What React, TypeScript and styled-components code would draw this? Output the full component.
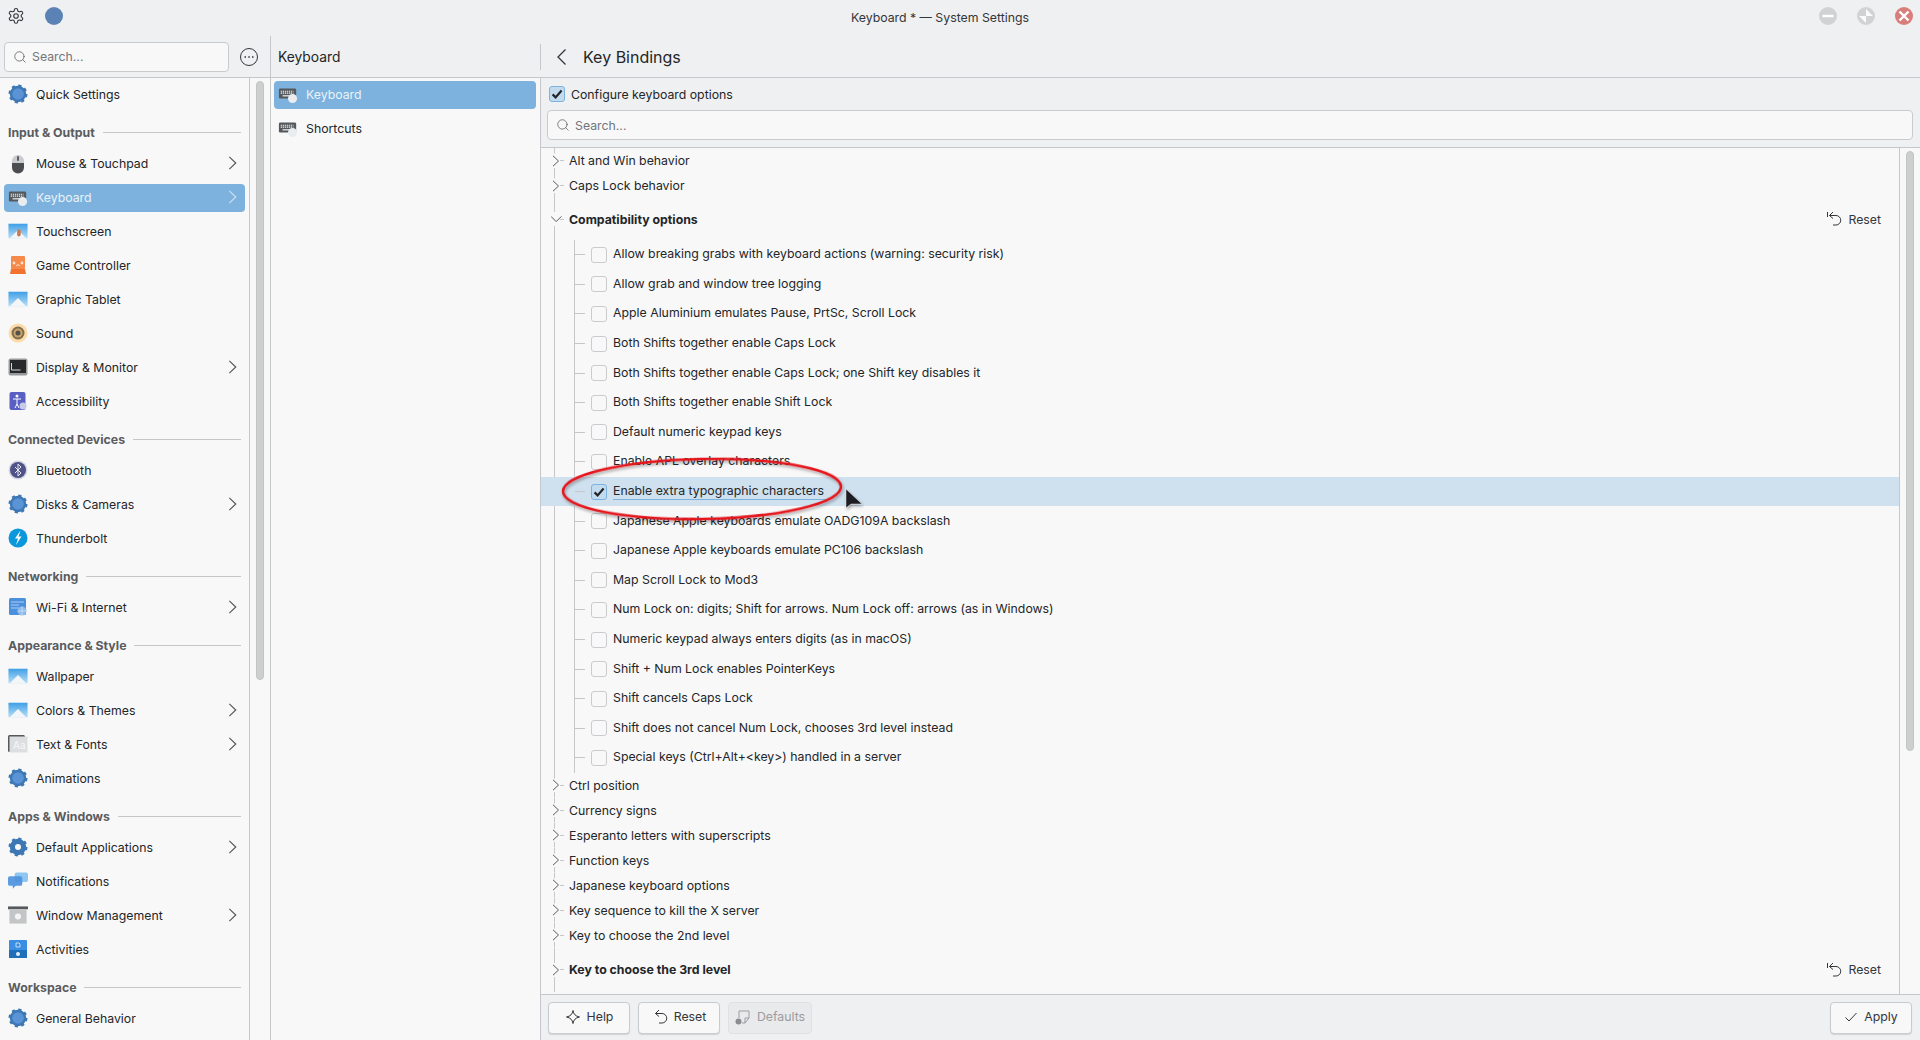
import React from "react";
import styled, { createGlobalStyle } from "styled-components";
import { Search } from "lucide-react";

const Global = createGlobalStyle`
  html, body { margin: 0; padding: 0; height: 100%; overflow: hidden; }
  body { font-family: Inter, "Noto Sans", sans-serif; font-size: 12.3px; color: #232629; background: #eff0f1; }
`;

const Window = styled.div`
  position: relative;
  width: 1920px;
  height: 1040px;
  display: flex;
  flex-direction: column;
  overflow: hidden;
`;
const TitleBar = styled.div`
  height: 36px;
  flex: none;
  display: grid;
  grid-template-columns: 200px 1fr 200px;
  align-items: center;
`;
const TitleLeft = styled.div`
  display: flex;
  align-items: center;
  gap: 20px;
  padding: 0 0 5px 7px;
`;
const TitleText = styled.div`
  text-align: center;
  padding: 0 40px 2px 0;
  color: #33363a;
`;
const TitleRight = styled.div`
  display: flex;
  justify-content: flex-end;
  gap: 20px;
  padding: 0 7px 4px 0;
`;
const Dot = styled.div`
  width: 18px;
  height: 18px;
  border-radius: 50%;
  background: #5b82b4;
`;
const Columns = styled.div`
  flex: 1;
  display: flex;
  min-height: 0;
`;
const Sidebar = styled.div`
  width: 270px;
  flex: none;
  border-right: 1px solid #c5c7ca;
  display: flex;
  flex-direction: column;
  min-height: 0;
`;
const HeaderBar = styled.div`
  height: 41px;
  flex: none;
  border-bottom: 1px solid #c5c7ca;
  display: flex;
  align-items: center;
`;
const SideHeader = styled(HeaderBar)`
  padding: 0 0 0 4px;
  gap: 10px;
`;
const SearchBox = styled.div<{ $w?: string }>`
  width: ${(p) => p.$w || "225px"};
  height: 30px;
  box-sizing: border-box;
  flex: none;
  border: 1px solid #c9cbce;
  border-radius: 4px;
  background: #f8f8f8;
  display: flex;
  align-items: center;
  gap: 5px;
  padding: 0 8px;
  color: #71767c;
`;
const SideBody = styled.div`
  flex: 1;
  min-height: 0;
  display: flex;
  background: #f8f8f8;
`;
const SideList = styled.div`
  width: 249px;
  flex: none;
  border-right: 1px solid #c5c7ca;
  overflow: hidden;
  display: flex;
  flex-direction: column;
`;
const ScrollGutter = styled.div<{ $w: number }>`
  width: ${(p) => p.$w}px;
  flex: none;
  display: flex;
  justify-content: center;
  padding-top: 3px;
`;
const Thumb = styled.div<{ $w: number; $h: number }>`
  width: ${(p) => p.$w}px;
  height: ${(p) => p.$h}px;
  border-radius: 4px;
  background: #cdcfcf;
  border: 1px solid #c3c5c5;
  box-sizing: border-box;
`;
const SideRow = styled.div<{ $on?: boolean }>`
  height: 28px;
  box-sizing: border-box;
  flex: none;
  margin: 3px 4px;
  border-radius: 4px;
  display: flex;
  align-items: center;
  gap: 8px;
  padding: 0 4px 2px 4px;
  background: ${(p) => (p.$on ? "#7cb2dd" : "transparent")};
  color: ${(p) => (p.$on ? "#eaf2f9" : "#232629")};
`;
const MidRow = styled(SideRow)`
  margin-left: 3px;
`;
const RowIcon = styled.span`
  width: 20px;
  height: 20px;
  flex: none;
  display: flex;
  align-items: center;
  justify-content: center;
`;
const RowLabel = styled.span`
  flex: 1;
  white-space: nowrap;
`;
const SectionHead = styled.div`
  height: 35px;
  flex: none;
  box-sizing: border-box;
  padding: 5px 8px 0 8px;
  display: flex;
  align-items: center;
  gap: 8px;
  font-weight: 700;
  color: #5a5c5f;
  white-space: nowrap;
  &::after {
    content: "";
    flex: 1;
    height: 1px;
    background: #c5c7ca;
  }
`;
const Middle = styled.div`
  width: 270px;
  flex: none;
  display: flex;
  flex-direction: column;
  min-height: 0;
`;
const MidHeader = styled(HeaderBar)`
  padding-left: 7px;
  justify-content: space-between;
  font-size: 13.8px;
`;
const HeaderSep = styled.div`
  width: 1px;
  height: 26px;
  background: #c5c7ca;
`;
const MidList = styled.div`
  flex: 1;
  background: #f8f8f8;
  border-right: 1px solid #c5c7ca;
  display: flex;
  flex-direction: column;
`;
const Content = styled.div`
  flex: 1;
  min-width: 0;
  display: flex;
  flex-direction: column;
`;
const ContentHeader = styled(HeaderBar)`
  padding-left: 14px;
  gap: 14px;
  font-size: 16px;
`;
const OptionBar = styled.div`
  height: 70px;
  flex: none;
  box-sizing: border-box;
  border-bottom: 1px solid #c5c7ca;
  padding: 0 7px 0 6px;
  display: flex;
  flex-direction: column;
`;
const ConfigRow = styled.div`
  height: 32px;
  flex: none;
  display: flex;
  align-items: center;
  gap: 6px;
  padding-left: 2px;
`;
const TreeArea = styled.div`
  flex: 1;
  min-height: 0;
  display: flex;
  background: #f8f8f8;
`;
const Tree = styled.div`
  width: 1358px;
  flex: none;
  border-right: 1px solid #c5c7ca;
  overflow: hidden;
`;
const line = "linear-gradient(#c5c7ca, #c5c7ca)";
const GroupRow = styled.div<{ $h?: number; $bold?: boolean }>`
  height: ${(p) => p.$h || 25}px;
  display: flex;
  align-items: center;
  padding: 0 18px 0 10px;
  font-weight: ${(p) => (p.$bold ? 700 : 400)};
  background-image: ${line}, ${line}, ${line};
  background-repeat: no-repeat;
  background-size: 1px calc(50% - 7px), 1px calc(50% - 7px), 4px 1px;
  background-position: 13px 0, 13px 100%, 19px 50%;
`;
const Twist = styled.span`
  width: 18px;
  height: 12px;
  flex: none;
  display: flex;
  align-items: center;
`;
const GroupLabel = styled.span`
  flex: 1;
`;
const ResetBtn = styled.span`
  display: flex;
  align-items: center;
  gap: 6px;
  color: #33363a;
  font-weight: 400;
`;
const LeafRow = styled.div<{ $on?: boolean }>`
  height: 29.6px;
  display: flex;
  align-items: center;
  gap: 6px;
  padding-left: 50px;
  white-space: nowrap;
  background-color: ${(p) => (p.$on ? "#cfe0ee" : "transparent")};
  background-image: ${(p) => (p.$on ? `${line}` : `${line}, ${line}, ${line}`)};
  background-repeat: no-repeat;
  background-size: ${(p) => (p.$on ? "10px 1px" : "1px 100%, 1px 100%, 10px 1px")};
  background-position: ${(p) => (p.$on ? "34px 50%" : "13px 0, 33px 0, 34px 50%")};
`;
const Box = styled.span<{ $on?: boolean }>`
  width: 16px;
  height: 16px;
  box-sizing: border-box;
  flex: none;
  border-radius: 3px;
  border: 1px solid ${(p) => (p.$on ? "#7cb2dd" : "#c9cbce")};
  background: ${(p) => (p.$on ? "#c3dbee" : "#f8f8f8")};
  display: flex;
  align-items: center;
  justify-content: center;
`;
const LeafText = styled.span<{ $on?: boolean }>`
  padding: 0 2px 1px 0;
  border-bottom: 1px solid ${(p) => (p.$on ? "#7cb2dd" : "transparent")};
`;
const Footer = styled.div`
  height: 46px;
  flex: none;
  box-sizing: border-box;
  border-top: 1px solid #c5c7ca;
  display: flex;
  align-items: center;
  gap: 8px;
  padding: 0 8px 0 7px;
`;
const Button = styled.div<{ $off?: boolean; $w: number }>`
  width: ${(p) => p.$w}px;
  height: 32px;
  box-sizing: border-box;
  border-radius: 4px;
  border: 1px solid ${(p) => (p.$off ? "#e0e1e3" : "#c9cbce")};
  background: ${(p) => (p.$off ? "#e9eaeb" : "#f8f8f8")};
  box-shadow: ${(p) => (p.$off ? "none" : "0 1px 1px rgba(0,0,0,.12)")};
  color: ${(p) => (p.$off ? "#9a9c9f" : "#33363a")};
  display: flex;
  align-items: center;
  justify-content: center;
  gap: 6px;
  padding-bottom: 2px;
`;
const Spacer = styled.div`
  flex: 1;
`;
const Overlay = styled.svg`
  position: absolute;
  left: 0;
  top: 0;
  pointer-events: none;
`;

const Chevron = ({ color = "#55585c", size = 12 }: { color?: string; size?: number }) => (
  <svg width={size} height={size} viewBox="0 0 12 12" fill="none">
    <path d="M2 .8 7.500 6 2 11.200" stroke={color} strokeWidth="1" />
  </svg>
);
const ChevronDown = () => (
  <svg width="12" height="12" viewBox="0 0 12 12" fill="none">
    <path d="M0 3.400 5.200 8.600l5.200-5.200" stroke="#55585c" strokeWidth="1" />
  </svg>
);
const Check = ({ size = 12 }: { size?: number }) => (
  <svg width={size} height={size} viewBox="0 0 12 12" fill="none">
    <path d="M1.600 6.400 4.600 9.400 10.600 2.600" stroke="#232629" strokeWidth="2.200" />
  </svg>
);
const ResetIcon = ({ bar }: { bar?: boolean }) => (
  <svg width="16" height="16" viewBox="0 0 16 16" fill="none" stroke="#33363a" strokeWidth="1">
    {bar && <path d="M1.500 1v5" />}
    <path d="M7 1 3.500 4.500 7 7.500M3.500 4.500H10a4.600 4.600 0 0 1 0 9.500H7" />
  </svg>
);

const Cog = ({ solid }: { solid?: boolean }) => (
  <svg width="20" height="20" viewBox="0 0 20 20">
    <circle cx="10" cy="10" r="8" fill="none" stroke="#3d78b4" strokeWidth="3" strokeDasharray="3 3.280" />
    <circle cx="10" cy="10" r="7" fill={solid ? "#3d78b4" : "#5a94d6"} stroke="#3d78b4" strokeWidth="2.400" />
    {solid && <circle cx="10" cy="10" r="3" fill="#f8f8f8" />}
  </svg>
);
const KeyboardIcon = () => (
  <svg width="22" height="20" viewBox="0 0 22 20">
    <rect x="1" y="4" width="19" height="11" rx="1.500" fill="#55585c" />
    <path d="M3 7h14M3 9h14" stroke="#f0f0f0" strokeWidth="1.300" strokeDasharray="1.400 .8" />
    <path d="M5 12h10" stroke="#f0f0f0" strokeWidth="1.300" />
    <circle cx="16" cy="15" r="5" fill="#e9edf0" />
  </svg>
);
const ScreenIcon = ({ hand }: { hand?: string }) => (
  <svg width="22" height="18" viewBox="0 0 22 18">
    <defs>
      <linearGradient id="sky" x1="0" y1="0" x2="0" y2="1">
        <stop offset="0" stopColor="#3f9fe6" />
        <stop offset="1" stopColor="#b9dff7" />
      </linearGradient>
    </defs>
    <rect x="0.500" y="1" width="21" height="16" fill="url(#sky)" />
    <path d="M2 17 11 8l9 9z" fill="#f3f6f8" />
    {hand && <rect x="10" y="7" width="4" height="8" rx="2" fill={hand} />}
  </svg>
);
const icons: Record<string, React.ReactNode> = {
  cog: <Cog />,
  solid: <Cog solid />,
  keyboard: <KeyboardIcon />,
  mouse: (
    <svg width="14" height="21" viewBox="0 0 14 21">
      <path d="M1 8a6 6 0 0 1 12 0v2H1z" fill="#c9cbce" />
      <path d="M1 10h12v4.500a6 6 0 0 1-12 0z" fill="#4b4d50" />
      <rect x="6" y="3" width="2" height="5" rx="1" fill="#5d6063" />
    </svg>
  ),
  touch: <ScreenIcon hand="#c97b52" />,
  tablet: <ScreenIcon />,
  colors: <ScreenIcon />,
  game: (
    <svg width="16" height="19" viewBox="0 0 16 19">
      <rect x="1" y="0" width="14" height="13" rx="1" fill="#f58a4b" />
      <path d="M1 13h14l1 5H0z" fill="#f2732e" />
      <circle cx="4" cy="7" r="1.400" fill="#fbe3d4" />
      <circle cx="12" cy="7" r="1.400" fill="#fbe3d4" />
      <path d="M6 10l2-1.500 2 1.500" stroke="#fbe3d4" fill="none" />
    </svg>
  ),
  sound: (
    <svg width="20" height="20" viewBox="0 0 20 20">
      <circle cx="10" cy="10" r="9.500" fill="#fcdba8" />
      <circle cx="10" cy="10" r="6.500" fill="#7c6c4f" />
      <circle cx="10" cy="10" r="4.500" fill="#c9a46b" />
      <circle cx="10" cy="10" r="2.500" fill="#55504a" />
    </svg>
  ),
  display: (
    <svg width="20" height="18" viewBox="0 0 20 18">
      <rect x="0.500" y="0.500" width="19" height="17" rx="2" fill="#97999b" />
      <rect x="2" y="2" width="16" height="13" fill="#26282b" />
      <path d="M3.500 5v7h9" stroke="#d5d7d9" fill="none" />
    </svg>
  ),
  access: (
    <svg width="18" height="18" viewBox="0 0 18 18">
      <rect x="0.500" y="0" width="16" height="18" rx="2" fill="#5a5fc4" />
      <circle cx="8" cy="4" r="1.500" fill="#fff" />
      <path d="M4 7h8M8 7v5l-2 4M8 12l2 4" stroke="#fff" fill="none" />
      <circle cx="14" cy="14" r="3.500" fill="#c7cbea" />
    </svg>
  ),
  bluetooth: (
    <svg width="20" height="20" viewBox="0 0 20 20">
      <circle cx="10" cy="10" r="9.500" fill="#d5d6e2" />
      <circle cx="10" cy="10" r="8" fill="#4f5388" />
      <path d="M7 7l6 6-3 3V4l3 3-6 6" stroke="#e6e7ef" fill="none" />
    </svg>
  ),
  bolt: (
    <svg width="20" height="20" viewBox="0 0 20 20">
      <circle cx="10" cy="10" r="9.500" fill="#0a97dc" />
      <path d="M12.500 2.500 7 10.500h3L8 17l5.500-8.500h-3z" fill="#fff" />
    </svg>
  ),
  wifi: (
    <svg width="18" height="18" viewBox="0 0 18 18">
      <rect x="0" y="0" width="17" height="17" rx="1.500" fill="#4a90dd" />
      <path d="M2 4h13M2 7h8M2 10h8" stroke="#a9cdf2" />
      <circle cx="13" cy="13" r="4.500" fill="#8dbbec" />
      <path d="M8.500 13h9M13 8.500v9" stroke="#d8e8f8" strokeWidth=".7" />
    </svg>
  ),
  fonts: (
    <svg width="20" height="18" viewBox="0 0 20 18">
      <rect x="0" y="0" width="17" height="17" rx="1.500" fill="#55585c" />
      <rect x="1.500" y="1.500" width="18" height="16" fill="#dcdedf" />
      <text x="5" y="14" fontSize="10" fill="#f8f8f8" fontFamily="Inter, sans-serif">Aa</text>
    </svg>
  ),
  notify: (
    <svg width="21" height="19" viewBox="0 0 21 19">
      <rect x="7" y="0" width="14" height="10" rx="2" fill="#8dc6f0" />
      <path d="M2 4h11a2 2 0 0 1 2 2v6a2 2 0 0 1-2 2H8l-3 3v-3H2a2 2 0 0 1-2-2V6a2 2 0 0 1 2-2z" fill="#4a90dd" opacity=".9" />
    </svg>
  ),
  windows: (
    <svg width="21" height="18" viewBox="0 0 21 18">
      <rect x="0" y="0" width="21" height="3" fill="#55585c" />
      <rect x="1.500" y="3" width="18" height="15" fill="#c3c5c6" />
      <circle cx="10.500" cy="10.500" r="3.200" fill="#f5f5f5" />
    </svg>
  ),
  activities: (
    <svg width="18" height="18" viewBox="0 0 18 18">
      <rect x="0" y="0" width="18" height="18" rx="1" fill="#3a8fe2" />
      <rect x="0" y="10" width="18" height="8" fill="#1f6fbb" />
      <path d="M7 3h3l1 1v3H7z" fill="none" stroke="#e3effa" strokeWidth=".8" />
      <circle cx="9" cy="14" r="2" fill="#e3effa" />
    </svg>
  ),
};

type Entry =
  | { head: string }
  | { label: string; icon: string; more?: boolean; on?: boolean };

const sidebar: Entry[] = [
  { label: "Quick Settings", icon: "cog" },
  { head: "Input & Output" },
  { label: "Mouse & Touchpad", icon: "mouse", more: true },
  { label: "Keyboard", icon: "keyboard", more: true, on: true },
  { label: "Touchscreen", icon: "touch" },
  { label: "Game Controller", icon: "game" },
  { label: "Graphic Tablet", icon: "tablet" },
  { label: "Sound", icon: "sound" },
  { label: "Display & Monitor", icon: "display", more: true },
  { label: "Accessibility", icon: "access" },
  { head: "Connected Devices" },
  { label: "Bluetooth", icon: "bluetooth" },
  { label: "Disks & Cameras", icon: "cog", more: true },
  { label: "Thunderbolt", icon: "bolt" },
  { head: "Networking" },
  { label: "Wi-Fi & Internet", icon: "wifi", more: true },
  { head: "Appearance & Style" },
  { label: "Wallpaper", icon: "tablet" },
  { label: "Colors & Themes", icon: "colors", more: true },
  { label: "Text & Fonts", icon: "fonts", more: true },
  { label: "Animations", icon: "cog" },
  { head: "Apps & Windows" },
  { label: "Default Applications", icon: "solid", more: true },
  { label: "Notifications", icon: "notify" },
  { label: "Window Management", icon: "windows", more: true },
  { label: "Activities", icon: "activities" },
  { head: "Workspace" },
  { label: "General Behavior", icon: "cog" },
];

const leaves = [
  "Allow breaking grabs with keyboard actions (warning: security risk)",
  "Allow grab and window tree logging",
  "Apple Aluminium emulates Pause, PrtSc, Scroll Lock",
  "Both Shifts together enable Caps Lock",
  "Both Shifts together enable Caps Lock; one Shift key disables it",
  "Both Shifts together enable Shift Lock",
  "Default numeric keypad keys",
  "Enable APL overlay characters",
  "Enable extra typographic characters",
  "Japanese Apple keyboards emulate OADG109A backslash",
  "Japanese Apple keyboards emulate PC106 backslash",
  "Map Scroll Lock to Mod3",
  "Num Lock on: digits; Shift for arrows. Num Lock off: arrows (as in Windows)",
  "Numeric keypad always enters digits (as in macOS)",
  "Shift + Num Lock enables PointerKeys",
  "Shift cancels Caps Lock",
  "Shift does not cancel Num Lock, chooses 3rd level instead",
  "Special keys (Ctrl+Alt+<key>) handled in a server",
];
const afterGroups = [
  "Ctrl position",
  "Currency signs",
  "Esperanto letters with superscripts",
  "Function keys",
  "Japanese keyboard options",
  "Key sequence to kill the X server",
  "Key to choose the 2nd level",
];

export default function App() {
  return (
    <Window>
      <Global />
      <TitleBar>
        <TitleLeft>
          <svg width="18" height="18" viewBox="0 0 24 24" fill="none" stroke="#33363a" strokeWidth="1.500">
            <path d="M12.200 2h-.4a2 2 0 0 0-2 2v.2a2 2 0 0 1-1 1.700l-.4.2a2 2 0 0 1-2 0l-.2-.1a2 2 0 0 0-2.700.7l-.2.400a2 2 0 0 0 .7 2.700l.2.100a2 2 0 0 1 1 1.700v.5a2 2 0 0 1-1 1.700l-.2.100a2 2 0 0 0-.7 2.700l.2.400a2 2 0 0 0 2.700.7l.2-.1a2 2 0 0 1 2 0l.4.200a2 2 0 0 1 1 1.700v.2a2 2 0 0 0 2 2h.4a2 2 0 0 0 2-2v-.2a2 2 0 0 1 1-1.700l.4-.2a2 2 0 0 1 2 0l.2.100a2 2 0 0 0 2.700-.7l.2-.4a2 2 0 0 0-.7-2.700l-.2-.1a2 2 0 0 1-1-1.700v-.5a2 2 0 0 1 1-1.700l.2-.1a2 2 0 0 0 .7-2.700l-.2-.4a2 2 0 0 0-2.700-.7l-.2.100a2 2 0 0 1-2 0l-.4-.2a2 2 0 0 1-1-1.700V4a2 2 0 0 0-2-2z" />
            <circle cx="12" cy="12" r="3" />
          </svg>
          <Dot />
        </TitleLeft>
        <TitleText>Keyboard * — System Settings</TitleText>
        <TitleRight>
          <svg width="18" height="18" viewBox="0 0 18 18">
            <circle cx="9" cy="9" r="9" fill="#d1d2d3" />
            <path d="M3.500 9h11" stroke="#fff" strokeWidth="2.400" />
          </svg>
          <svg width="18" height="18" viewBox="0 0 18 18">
            <circle cx="9" cy="9" r="9" fill="#d1d2d3" />
            <path d="M9 2l7 7H9zM9 16 2 9h7z" fill="#fff" opacity=".9" />
          </svg>
          <svg width="18" height="18" viewBox="0 0 18 18">
            <circle cx="9" cy="9" r="9" fill="#d87f7b" />
            <path d="M4.500 4.500l9 9M13.500 4.500l-9 9" stroke="#fff" strokeWidth="2.400" />
          </svg>
        </TitleRight>
      </TitleBar>
      <Columns>
        <Sidebar>
          <SideHeader>
            <SearchBox>
              <Search size={14} color="#55585c" strokeWidth={1.300} />
              Search...
            </SearchBox>
            <svg width="20" height="20" viewBox="0 0 20 20" fill="none">
              <circle cx="10" cy="10" r="8.500" stroke="#33363a" />
              <path d="M5.500 10h1.500M9.300 10h1.500M13 10h1.500" stroke="#33363a" strokeWidth="1.500" />
            </svg>
          </SideHeader>
          <SideBody>
            <SideList>
              {sidebar.map((e) =>
                "head" in e ? (
                  <SectionHead key={e.head}>{e.head}</SectionHead>
                ) : (
                  <SideRow key={e.label} $on={e.on}>
                    <RowIcon>{icons[e.icon]}</RowIcon>
                    <RowLabel>{e.label}</RowLabel>
                    {e.more && <Chevron color={e.on ? "#cfe0ee" : "#55585c"} size={14} />}
                  </SideRow>
                ),
              )}
            </SideList>
            <ScrollGutter $w={20}>
              <Thumb $w={8} $h={599} />
            </ScrollGutter>
          </SideBody>
        </Sidebar>
        <Middle>
          <MidHeader>
            Keyboard
            <HeaderSep />
          </MidHeader>
          <MidList>
            <MidRow $on>
              <RowIcon><KeyboardIcon /></RowIcon>
              <RowLabel>Keyboard</RowLabel>
            </MidRow>
            <MidRow>
              <RowIcon><KeyboardIcon /></RowIcon>
              <RowLabel>Shortcuts</RowLabel>
            </MidRow>
          </MidList>
        </Middle>
        <Content>
          <ContentHeader>
            <svg width="14" height="18" viewBox="0 0 14 18" fill="none">
              <path d="M10.500 1.500 3 9l7.500 7.500" stroke="#33363a" strokeWidth="1.300" />
            </svg>
            Key Bindings
          </ContentHeader>
          <OptionBar>
            <ConfigRow>
              <Box $on><Check /></Box>
              Configure keyboard options
            </ConfigRow>
            <SearchBox $w="100%">
              <Search size={14} color="#55585c" strokeWidth={1.300} />
              Search...
            </SearchBox>
          </OptionBar>
          <TreeArea>
            <Tree>
              <GroupRow><Twist><Chevron /></Twist><GroupLabel>Alt and Win behavior</GroupLabel></GroupRow>
              <GroupRow><Twist><Chevron /></Twist><GroupLabel>Caps Lock behavior</GroupLabel></GroupRow>
              <GroupRow $h={42} $bold>
                <Twist><ChevronDown /></Twist>
                <GroupLabel>Compatibility options</GroupLabel>
                <ResetBtn><ResetIcon bar />Reset</ResetBtn>
              </GroupRow>
              {leaves.map((l, i) => (
                <LeafRow key={l} $on={i === 8}>
                  <Box $on={i === 8}>{i === 8 && <Check />}</Box>
                  <LeafText $on={i === 8}>{l}</LeafText>
                </LeafRow>
              ))}
              {afterGroups.map((g) => (
                <GroupRow key={g}><Twist><Chevron /></Twist><GroupLabel>{g}</GroupLabel></GroupRow>
              ))}
              <GroupRow $h={44} $bold>
                <Twist><Chevron /></Twist>
                <GroupLabel>Key to choose the 3rd level</GroupLabel>
                <ResetBtn><ResetIcon bar />Reset</ResetBtn>
              </GroupRow>
            </Tree>
            <ScrollGutter $w={20}>
              <Thumb $w={8} $h={600} />
            </ScrollGutter>
          </TreeArea>
          <Footer>
            <Button $w={82}>
              <svg width="16" height="16" viewBox="0 0 16 16" fill="none" stroke="#33363a">
                <path d="M8 1.500C8.500 5 10.500 7.300 14.500 8 10.500 8.700 8.500 11 8 14.500 7.500 11 5.500 8.700 1.500 8 5.500 7.300 7.500 5 8 1.500z" />
              </svg>
              Help
            </Button>
            <Button $w={82}><ResetIcon />Reset</Button>
            <Button $w={84} $off>
              <svg width="16" height="16" viewBox="0 0 16 16" fill="none" stroke="#9a9c9f">
                <path d="M4 9V2h10v7l-4 5H7" />
                <path d="M10 14V9h4" />
                <circle cx="3.500" cy="12.500" r="3" fill="#8a8c8f" stroke="none" />
              </svg>
              Defaults
            </Button>
            <Spacer />
            <Button $w={82}>
              <svg width="14" height="14" viewBox="0 0 14 14" fill="none" stroke="#33363a">
                <path d="M1.500 7.500 5 11l7.500-8" />
              </svg>
              Apply
            </Button>
          </Footer>
        </Content>
      </Columns>
      <Overlay width="1920" height="1040" viewBox="0 0 1920 1040">
        <defs>
          <filter id="soft" x="-10%" y="-30%" width="120%" height="160%">
            <feDropShadow dx="1" dy="2" stdDeviation="1.500" floodColor="#000" floodOpacity=".35" />
          </filter>
        </defs>
        <ellipse cx="702" cy="489" rx="139" ry="30" fill="none" stroke="#e4141c" strokeWidth="2.500" transform="rotate(-1 702 489)" filter="url(#soft)" />
        <path d="M846 489v19l5-4 3 0 8 0z" fill="#1b1d20" stroke="#eee" strokeWidth=".5" filter="url(#soft)" />
      </Overlay>
    </Window>
  );
}
